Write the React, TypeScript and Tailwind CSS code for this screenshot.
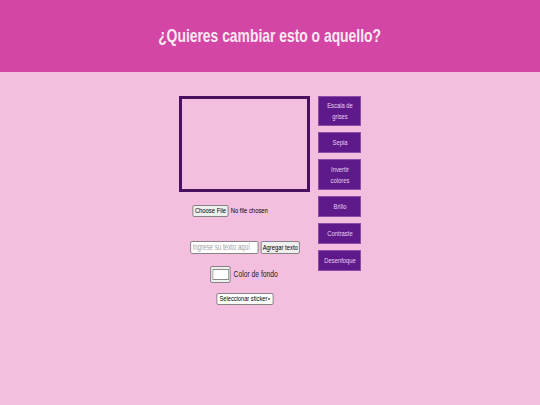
import React from 'react';

const filtros = [
  { label: 'Escala de grises', alto: 'h-[30px]' },
  { label: 'Sepia', alto: 'h-[21px]' },
  { label: 'Invertir colores', alto: 'h-[31px]' },
  { label: 'Brillo', alto: 'h-[21px]' },
  { label: 'Contraste', alto: 'h-[21px]' },
  { label: 'Desenfoque', alto: 'h-[21px]' },
];

// the reference is rendered with condensed type, so text rows are squeezed to 75% width
const App = () => {
  return (
    <div className="min-h-screen bg-[#f4bfdf] font-['Liberation_Sans',Arial,sans-serif]">
      <header className="h-[72px] bg-[#d446a6] flex items-center justify-center">
        <h1 className="inline-block scale-x-75 text-[#fbe9f4] font-bold text-[18.5px] leading-none whitespace-nowrap">
          ¿Quieres cambiar esto o aquello?
        </h1>
      </header>

      <main className="flex justify-center gap-2 pt-6">
        <div className="w-[131px] flex flex-col items-center">
          <div className="w-[131px] h-[96px] border-[3px] border-[#4a1060]"></div>

          <div className="mt-[13px] w-[140px] h-[12px] shrink-0 flex items-center scale-x-75 whitespace-nowrap">
            <button className="h-[12px] w-[48px] bg-[#efefef] border border-[#767676] rounded-[2px] text-[7.8px] leading-none text-black">
              Choose File
            </button>
            <span className="ml-[3px] text-[7.8px] text-black">No file chosen</span>
          </div>

          <div className="mt-[24px] shrink-0 flex items-center gap-[3px] scale-x-75">
            <input
              type="text"
              placeholder="Ingrese su texto aquí"
              className="w-[91px] h-[13px] px-[2px] bg-white border border-[#767676] rounded-[2px] text-[8.2px] placeholder:text-[#a0a0a0] outline-none"
            />
            <button className="w-[52px] h-[13px] bg-[#efefef] border border-[#767676] rounded-[2px] text-[7.8px] leading-none text-black whitespace-nowrap">
              Agregar texto
            </button>
          </div>

          <div className="mt-[12px] shrink-0 flex items-center scale-x-75 whitespace-nowrap">
            <div className="w-[27px] h-[17px] bg-[#efefef] border border-[#767676] rounded-[2px] flex items-center justify-center">
              <div className="w-[22px] h-[11px] bg-white border border-[#8a8a8a]"></div>
            </div>
            <span className="ml-[4px] text-[9px] text-[#222]">Color de fondo</span>
          </div>

          <div className="mt-[10px] w-[76px] h-[12px] shrink-0 bg-white border border-[#767676] rounded-[2px] flex items-center justify-between px-[3px] scale-x-75 whitespace-nowrap">
            <span className="text-[7.6px] leading-none text-black">Seleccionar sticker</span>
            <svg viewBox="0 0 10 10" className="w-[6px] h-[6px]">
              <path d="M1.5 3 L5 6.5 L8.5 3" fill="none" stroke="#000" strokeWidth="2.2" />
            </svg>
          </div>
        </div>

        <div className="w-[43px] flex flex-col gap-[6px]">
          {filtros.map((f) => (
            <button
              key={f.label}
              className={`${f.alto} w-[43px] bg-[#5e1a8b] border border-[#8b4caa] flex items-center justify-center`}
            >
              <span className="inline-block w-[48px] shrink-0 scale-x-75 text-[#e6d2f0] text-[7.8px] leading-[11px] text-center">
                {f.label}
              </span>
            </button>
          ))}
        </div>
      </main>
    </div>
  );
};

export default App;
